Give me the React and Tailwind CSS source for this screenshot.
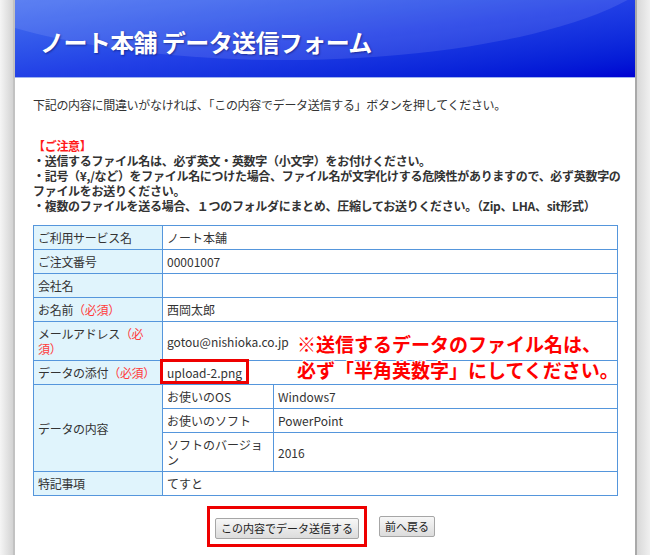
import React from "react";

const rows = [
  { label: "ご利用サービス名", value: "ノート本舗" },
  { label: "ご注文番号", value: "00001007" },
  { label: "会社名", value: "" },
];

function Req() {
  return <span className="text-[#ff3b3b]">（必須）</span>;
}

const th = "border border-[#5596dc] bg-[#e0f4fc] px-[4px] py-[4px] text-left align-middle font-normal whitespace-nowrap tracking-[-0.3px]";
const td = "border border-[#5596dc] bg-white px-[4px] py-[4px] align-middle whitespace-nowrap";

export default function App() {
  return (
    <div className="flex w-[650px] h-[555px] overflow-hidden bg-[#ececec] font-['Noto_Sans_CJK_JP',sans-serif] text-[#333]">
      {/* left gutter */}
      <div className="w-[13px] shrink-0 bg-gradient-to-r from-[#f5f5f5] to-[#d3d3d3]"></div>

      {/* card */}
      <div className="w-[624px] shrink-0 bg-white border-l-2 border-l-[#c2c2c2] border-r-2 border-r-[#a9a9a9]">
        {/* header */}
        <div className="relative h-[78px] overflow-hidden border-b border-[#9fb3ef] bg-gradient-to-br from-[#4a72f0] via-[#2240e6] to-[#0000d2]">
          <div className="absolute -left-[120px] -top-[170px] w-[780px] h-[230px] rounded-[50%] bg-white/10"></div>
          <h1 className="relative pl-[25px] pt-[26px] text-[24px] leading-[32px] font-bold text-white tracking-[-0.6px] [text-shadow:1px_1px_2px_rgba(0,0,60,0.45)]">
            ノート本舗 データ送信フォーム
          </h1>
        </div>

        <div className="pl-[18px] pr-[17px]">
          <p className="pt-[19px] text-[12px] leading-[15px] tracking-[-0.3px] whitespace-nowrap">
            下記の内容に間違いがなければ、「この内容でデータ送信する」ボタンを押してください。
          </p>

          {/* notice */}
          <div className="mt-[26px] text-[12px] leading-[15px] font-bold tracking-[-0.3px] whitespace-nowrap">
            <p className="text-[#ff1a1a]">【ご注意】</p>
            <p>・送信するファイル名は、必ず英文・英数字（小文字）をお付けください。</p>
            <p>
              ・記号（¥,/など）をファイル名につけた場合、ファイル名が文字化けする危険性がありますので、必ず英数字の
              <br />
              ファイルをお送りください。
            </p>
            <p>・複数のファイルを送る場合、１つのフォルダにまとめ、圧縮してお送りください。（Zip、LHA、sit形式）</p>
          </div>

          {/* table */}
          <div className="relative mt-[12px]">
            <table className="w-[585px] border-collapse text-[12px] leading-[15px] table-fixed">
              <colgroup>
                <col className="w-[129px]" />
                <col className="w-[111px]" />
                <col />
              </colgroup>
              <tbody>
                {rows.map((r) => (
                  <tr key={r.label}>
                    <th className={th}>{r.label}</th>
                    <td className={td} colSpan={2}>{r.value}</td>
                  </tr>
                ))}
                <tr>
                  <th className={th}>お名前<Req /></th>
                  <td className={td} colSpan={2}>西岡太郎</td>
                </tr>
                <tr>
                  <th className={th}>
                    メールアドレス<span className="text-[#ff3b3b]">（必</span>
                    <br />
                    <span className="text-[#ff3b3b]">須）</span>
                  </th>
                  <td className={td} colSpan={2}>gotou@nishioka.co.jp</td>
                </tr>
                <tr>
                  <th className={th}>データの添付<Req /></th>
                  <td className={td + " relative"} colSpan={2}>
                    upload-2.png
                    <span className="absolute left-[-3px] top-[-2px] w-[89px] h-[25px] border-[3px] border-[#ee0000]"></span>
                  </td>
                </tr>
                <tr>
                  <th className={th} rowSpan={3}>データの内容</th>
                  <td className={td}>お使いのOS</td>
                  <td className={td}>Windows7</td>
                </tr>
                <tr>
                  <td className={td}>お使いのソフト</td>
                  <td className={td}>PowerPoint</td>
                </tr>
                <tr>
                  <td className={td}>
                    ソフトのバージョ
                    <br />ン
                  </td>
                  <td className={td}>2016</td>
                </tr>
                <tr>
                  <th className={th}>特記事項</th>
                  <td className={td} colSpan={2}>てすと</td>
                </tr>
              </tbody>
            </table>

            {/* red annotation overlay */}
            <div className="absolute left-[264px] top-[106px] text-[19px] leading-[26px] font-bold text-[#f00] whitespace-nowrap [text-shadow:-1px_-1px_0_#fff,1px_-1px_0_#fff,-1px_1px_0_#fff,1px_1px_0_#fff,0_2px_0_#fff,2px_0_0_#fff]">
              <p>※送信するデータのファイル名は、</p>
              <p>必ず「半角英数字」にしてください。</p>
            </div>
          </div>

          {/* buttons */}
          <div className="mt-[10px] flex items-center pl-[174px] gap-[12px]">
            <div className="border-[3px] border-[#ee0000] p-[5px]">
              <button className="h-[21px] px-[5px] text-[11px] leading-[19px] border border-[#a6a6a6] rounded-[2px] bg-gradient-to-b from-[#f7f7f7] to-[#dcdcdc] text-[#222]">
                この内容でデータ送信する
              </button>
            </div>
            <button className="h-[21px] px-[5px] text-[11px] leading-[19px] border border-[#a6a6a6] rounded-[2px] bg-gradient-to-b from-[#f7f7f7] to-[#dcdcdc] text-[#222]">
              前へ戻る
            </button>
          </div>
        </div>
      </div>

      {/* right gutter */}
      <div className="flex-1 bg-gradient-to-r from-[#d8d8d8] to-[#f0f0f0]"></div>
    </div>
  );
}
